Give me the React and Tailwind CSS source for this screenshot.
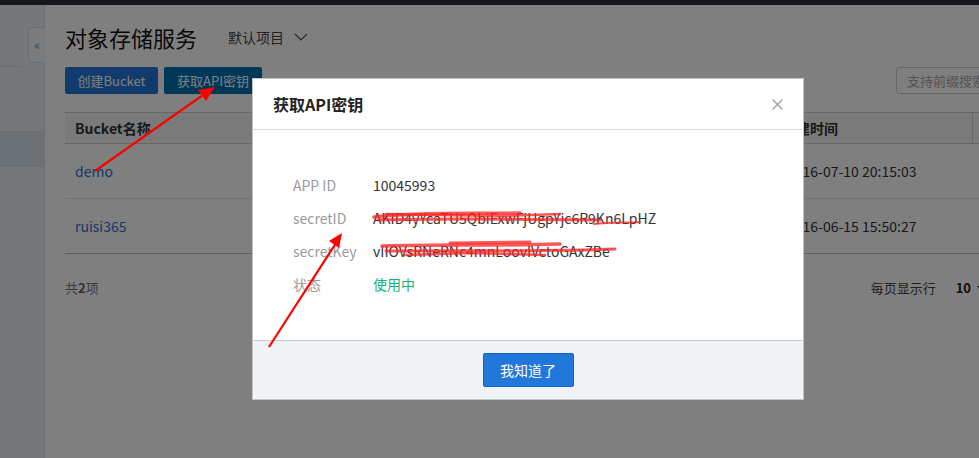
import React from "react";

const font = { fontFamily: '"Noto Sans CJK SC", "Liberation Sans", sans-serif' };

const rows = [
  { name: "demo", time: "2016-07-10 20:15:03" },
  { name: "ruisi365", time: "2016-06-15 15:50:27" },
];

const Sidebar = () => (
  <aside className="relative w-[45px] shrink-0 border-r border-[#d6dde4] bg-[#ebf1f7]">
    <div className="mt-[61px] h-px w-[22px] bg-[#d8dfe6]" />
    <div className="mt-[64px] h-[36px] w-[44px] bg-[#d7e1eb]" />
    <div className="absolute left-[28px] top-[22px] flex h-[36px] w-[17px] items-center justify-center rounded-l-[3px] border border-r-0 border-[#d3dbe3] bg-[#f3f6f9] text-[13px] text-[#8a949e]">
      «
    </div>
  </aside>
);

const Main = () => (
  <section className="min-w-0 flex-1 overflow-hidden pl-[20px] pt-[16px]">
    <div className="flex h-[32px] items-center">
      <h1 className="text-[22px] font-normal leading-[32px] text-[#111]">对象存储服务</h1>
      <div className="ml-[31px] flex items-center gap-[10px] text-[14px] text-[#444]">
        <span>默认项目</span>
        <svg width="14" height="9" viewBox="0 0 14 9" fill="none" stroke="#555" strokeWidth="1.2">
          <polyline points="1,1 7,7 13,1" />
        </svg>
      </div>
    </div>
    <div className="mt-[14px] flex h-[27px] items-center">
      <button className="h-[27px] w-[93px] rounded-[2px] bg-[#2277da] text-[13px] text-white">创建Bucket</button>
      <button className="ml-[6px] h-[27px] w-[98px] rounded-[2px] bg-[#0070b3] text-[13px] text-white">获取API密钥</button>
      <div className="-mr-[43px] ml-auto flex h-[27px] w-[126px] shrink-0 items-center rounded-l-[3px] border border-[#cfcfcf] pl-[10px] text-[13px] text-[#aaa]">
        支持前缀搜索
      </div>
    </div>
    <div className="mt-[18px] w-[960px]">
      <div className="grid h-[32px] grid-cols-[712px_196px_1fr] border-y border-[#cfcfcf] bg-[#f4f4f4] text-[14px] font-bold text-[#333]">
        <div className="flex items-center pl-[10px]">Bucket名称</div>
        <div className="flex items-center border-r border-[#cfcfcf] pl-[5px]">创建时间</div>
        <div />
      </div>
      {rows.map((r, i) => (
        <div
          key={r.name}
          className={`grid h-[55px] grid-cols-[712px_196px_1fr] border-b text-[14px] ${
            i === rows.length - 1 ? "border-[#b9b9c4]" : "border-[#e2e2e2]"
          }`}
        >
          <div className="flex items-center pl-[10px] text-[#2c6fd1]">{r.name}</div>
          <div className="flex items-center pl-[10px] text-[#333]">{r.time}</div>
          <div />
        </div>
      ))}
      <div className="mt-[24px] flex h-[20px] items-center text-[13px]">
        <span className="text-[#777]">共<b className="text-[#666]">2</b>项</span>
        <span className="ml-auto text-[#444]">每页显示行</span>
        <span className="ml-[20px] mr-[40px] flex items-center gap-[6px] font-bold text-[#222]">
          10
          <svg width="8" height="5" viewBox="0 0 8 5"><polygon points="0,0 8,0 4,5" fill="#333" /></svg>
        </span>
      </div>
    </div>
  </section>
);

const Field = ({ label, children }) => (
  <div className="flex h-[33px] items-center text-[14px]">
    <span className="w-[80px] text-[#9a9a9a]">{label}</span>
    {children}
  </div>
);

const Modal = () => (
  <div className="absolute left-[252px] top-[78px] w-[552px] border border-[#c4c4c4] bg-white">
    <div className="flex h-[51px] items-center justify-between border-b border-[#dcdcdc] pl-[20px] pr-[20px]">
      <h2 className="text-[16px] font-bold text-[#222]">获取API密钥</h2>
      <svg width="11" height="11" viewBox="0 0 11 11" stroke="#9aa3ad" strokeWidth="1.4">
        <line x1="0.5" y1="0.5" x2="10.5" y2="10.5" />
        <line x1="10.5" y1="0.5" x2="0.5" y2="10.5" />
      </svg>
    </div>
    <div className="h-[210px] pl-[40px] pt-[39px]">
      <Field label="APP ID">
        <span className="text-[#333]">10045993</span>
      </Field>
      <Field label="secretID">
        <span className="text-[#333]">AKID4yYcaTU5QbiExwFjUgpYjc6R9Kn6LpHZ</span>
      </Field>
      <Field label="secretKey">
        <span className="text-[#333]">vIIOVsRNeRNc4mnLoovIVctoGAxZBe</span>
      </Field>
      <Field label="状态">
        <span className="text-[#17b07b]">使用中</span>
      </Field>
    </div>
    <div className="flex h-[59px] items-center justify-center border-t border-[#c9ccd0] bg-[#eff3f6]">
      <button className="h-[34px] w-[91px] rounded-[2px] border border-[#1565c0] bg-[#2277da] text-[14px] text-white">
        我知道了
      </button>
    </div>
  </div>
);

const Marks = () => (
  <svg className="pointer-events-none absolute inset-0" width="979" height="458" viewBox="0 0 979 458">
    <g stroke="#ff0000" strokeWidth="2.2" fill="none">
      <line x1="95" y1="171" x2="203" y2="95" />
      <line x1="269" y1="347" x2="336" y2="243" />
    </g>
    <polygon points="215,87 198,90 206,101" fill="#ff0000" />
    <polygon points="342,233 329,241 339,248" fill="#ff0000" />
    <g stroke="#ff1f1f" strokeOpacity="0.75" fill="none" strokeLinecap="round">
      <path d="M374 217 C420 212 470 214 520 213" strokeWidth="3.5" />
      <path d="M378 220 C440 218 520 219 600 220" strokeWidth="3" />
      <path d="M386 214 L500 216 L560 214" strokeWidth="2.5" />
      <path d="M594 224 C610 222 630 223 640 222" strokeWidth="2" />
      <path d="M382 246 C440 244 500 246 560 244" strokeWidth="3.5" />
      <path d="M386 251 C460 250 540 252 615 249" strokeWidth="3" />
      <path d="M404 255 L470 253 L545 255" strokeWidth="2.5" />
      <path d="M450 243 L530 242" strokeWidth="3" />
    </g>
  </svg>
);

export default function App() {
  return (
    <div className="relative h-[458px] w-[979px] overflow-hidden bg-white" style={font}>
      <div className="h-[5px] bg-[#2a2f3a]" />
      <div className="flex h-[453px]">
        <Sidebar />
        <Main />
      </div>
      <div className="absolute inset-0 bg-black/50" />
      <Modal />
      <Marks />
    </div>
  );
}
